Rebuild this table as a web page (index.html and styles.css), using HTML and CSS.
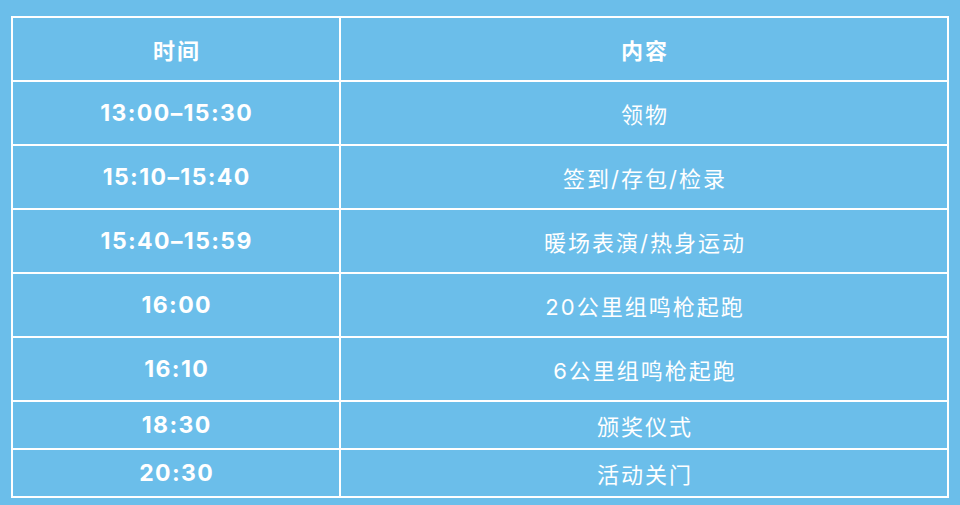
FILE: index.html
```html
<!DOCTYPE html>
<html lang="zh-CN">
<head>
<meta charset="utf-8">
<title>活动流程</title>
<link rel="stylesheet" href="styles.css">
</head>
<body>
<table class="schedule">
  <thead>
    <tr class="row-tall">
      <th class="col-time">时间</th>
      <th class="col-content">内容</th>
    </tr>
  </thead>
  <tbody>
    <tr class="row-tall"><td class="time">13:00–15:30</td><td class="content">领物</td></tr>
    <tr class="row-tall"><td class="time">15:10–15:40</td><td class="content">签到/存包/检录</td></tr>
    <tr class="row-tall"><td class="time">15:40–15:59</td><td class="content">暖场表演/热身运动</td></tr>
    <tr class="row-tall"><td class="time">16:00</td><td class="content">20公里组鸣枪起跑</td></tr>
    <tr class="row-tall"><td class="time">16:10</td><td class="content">6公里组鸣枪起跑</td></tr>
    <tr class="row-short"><td class="time">18:30</td><td class="content">颁奖仪式</td></tr>
    <tr class="row-short"><td class="time">20:30</td><td class="content">活动关门</td></tr>
  </tbody>
</table>
</body>
</html>
```
FILE: styles.css
```css
html, body {
  margin: 0;
  padding: 0;
  background: #6bbeea;
}
body {
  padding: 16px 0 0 11px;
  font-family: Inter, "Noto Sans CJK SC", sans-serif;
  color: #fff;
}
.schedule {
  border-collapse: collapse;
  width: 938px;
  table-layout: fixed;
  border: 2px solid #fff;
}
.schedule th,
.schedule td {
  border: 2px solid #fff;
  padding: 0;
  text-align: center;
  vertical-align: middle;
  letter-spacing: 2px;
  text-indent: 2px;
}
.col-time { width: 326px; }
.schedule th {
  font-size: 22px;
  font-weight: 700;
}
.row-tall { height: 64px; }
.row-short { height: 48px; }
.schedule .time {
  font-size: 23px;
  font-weight: 700;
  letter-spacing: 1.4px;
  text-indent: 1.4px;
}
.content {
  font-size: 22px;
  font-weight: 400;
}
```
